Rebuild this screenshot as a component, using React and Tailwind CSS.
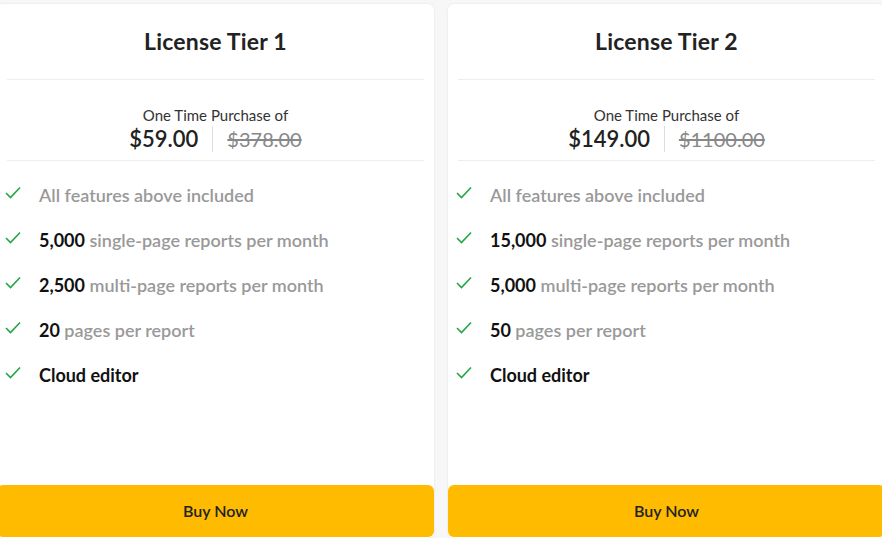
const tiers = [
  { name: "License Tier 1", price: "$59.00", old: "$378.00", f: [["5,000", " single-page reports per month"], ["2,500", " multi-page reports per month"], ["20", " pages per report"]] },
  { name: "License Tier 2", price: "$149.00", old: "$1100.00", f: [["15,000", " single-page reports per month"], ["5,000", " multi-page reports per month"], ["50", " pages per report"]] },
];
const Check = () => (
  <svg width="16" height="13" viewBox="0 0 16 13" className="shrink-0 mt-[1px]"><path d="M1 7 L5.5 11.5 L15 1.5" fill="none" stroke="#22a745" strokeWidth="1.6" /></svg>
);
export default function App() {
  return (
    <div className="w-[885px] h-[538px] overflow-hidden bg-[#f7f7f7] flex gap-[14px] pt-[4px] ml-[-3px]" style={{ fontFamily: "Lato, 'Open Sans', sans-serif" }}>
      {tiers.map((t) => (
        <div key={t.name} className="w-[437px] shrink-0 bg-white rounded-[6px] shadow-[0_0_3px_rgba(0,0,0,0.08)] flex flex-col">
          <div className="h-[76px] flex items-center justify-center text-[23px] font-bold text-[#222] tracking-[0.2px] border-b border-[#eee] mx-[10px]">{t.name}</div>
          <div className="flex flex-col items-center pt-[26px] pb-[8px] border-b border-[#eee] mx-[10px]">
            <div className="text-[15px] text-[#333] leading-[18px]">One Time Purchase of</div>
            <div className="flex items-center mt-[2px]">
              <span className="text-[22px] font-semibold text-[#222] pr-[14px] border-r border-[#ddd] leading-[26px]">{t.price}</span>
              <span className="text-[20px] text-[#888] line-through pl-[14px] leading-[26px]">{t.old}</span>
            </div>
          </div>
          <div className="flex flex-col gap-[24px] pt-[24px] pl-[8px] text-[18px] leading-[21px]">
            <div className="flex items-start gap-[18px]"><Check /><span className="text-[#999] font-semibold">All features above included</span></div>
            {t.f.map(([b, r]) => (
              <div key={r} className="flex items-start gap-[18px]"><Check /><span className="text-[#999] font-semibold"><b className="text-[#111] font-bold">{b}</b>{r}</span></div>
            ))}
            <div className="flex items-start gap-[18px]"><Check /><span className="text-[#111] font-bold">Cloud editor</span></div>
          </div>
          <div className="mt-auto mb-[1px]">
            <div className="h-[52px] bg-[#ffbb00] rounded-[6px] flex items-center justify-center text-[16px] font-semibold text-[#222] mt-[98px]">Buy Now</div>
          </div>
        </div>
      ))}
    </div>
  );
}
